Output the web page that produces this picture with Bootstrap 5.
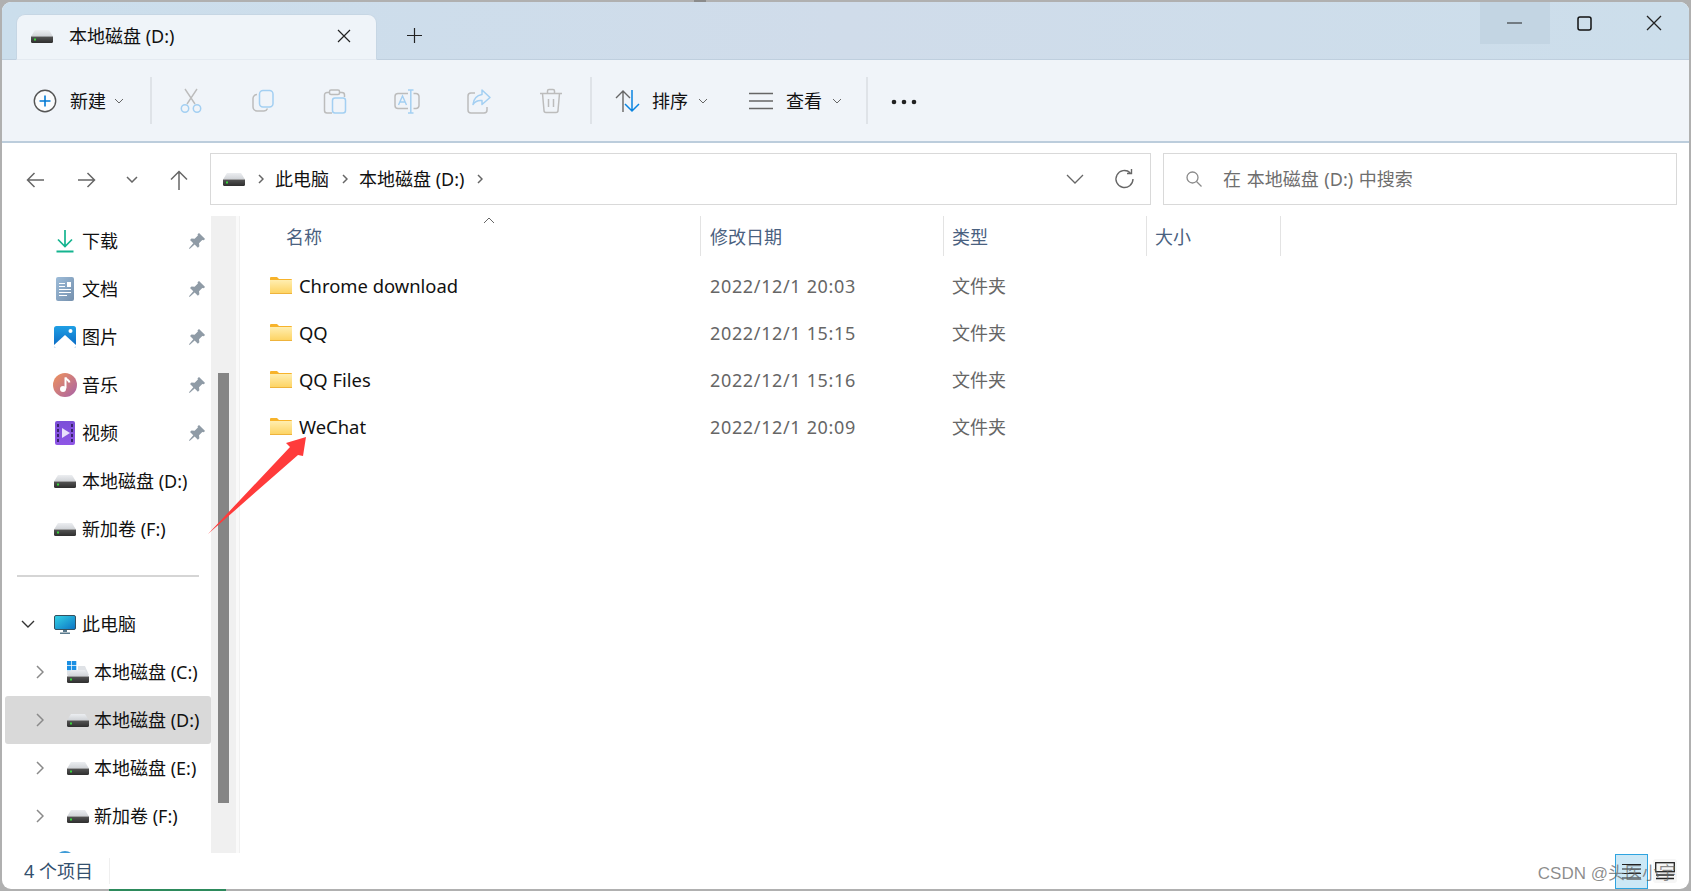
<!DOCTYPE html>
<html lang="zh-CN">
<head>
    <meta charset="UTF-8">
    <title>本地磁盘 (D:)</title>
    <link rel="stylesheet" href="https://cdn.jsdelivr.net/npm/bootstrap@5.3.3/dist/css/bootstrap.min.css">
    <script src="https://cdn.jsdelivr.net/npm/bootstrap@5.3.3/dist/js/bootstrap.bundle.min.js"></script>
    <style>
        html, body { height: 891px; overflow: hidden; }
        body {
            background: #b0b0b0;
            color: #111;
            font-family: "Noto Sans", "Noto Sans CJK SC", sans-serif;
            font-size: 18px;
            line-height: 24px;
        }
        svg { flex: none; display: block; }
        .frame { width: 1691px; height: 891px; padding: 2px; position: relative; }
        .win { height: 887px; background: #fff; border-radius: 9px; overflow: hidden; }

        .title-bar { height: 58px; background: linear-gradient(90deg, #cbdeec, #d0dcea 50%, #ccdeeb); border-bottom: 1px solid #bfcfde; }
        .tab { width: 361px; height: 46px; margin-left: 14px; margin-bottom: -1px; padding: 0 25px 2px 14px; background: #eff4f9; border: 1px solid #c6d6e4; border-bottom-color: #e4eaf1; border-radius: 9px 9px 0 0; }
        .tab-text { margin-left: 16px; }
        .plus { margin-left: 30px; margin-top: 1px; }
        .ctl { height: 42px; }
        .ctl-min { width: 70px; padding-right: 2px; background: #c3d5e3; }
        .ctl-max { width: 69px; }
        .ctl-close { width: 70px; }

        .tools { height: 83px; background: #f0f4f9; border-bottom: 2px solid #bccddc; }
        .tool-new { width: 148px; padding-left: 30px; }
        .lbl-new { margin-left: 12px; }
        .tool-sep { width: 2px; height: 47px; background: #dfe3e8; }
        .tool-cell { width: 72px; }
        .tools-cells { margin-left: 3px; margin-right: 3px; }
        .tool-sort { width: 274px; padding-left: 23px; }
        .lbl-sort { margin-left: 11px; width: 37px; }
        .lbl-view { margin-left: 13px; width: 37px; }
        .caret-1 { margin-left: 9px; }
        .view-icon { margin-left: 41px; }
        .tool-more { margin-left: 23px; margin-top: 2px; }

        .addr-row { height: 73px; padding-top: 10px; padding-bottom: 10px; }
        .nav-btns { width: 208px; }
        .nav-a { width: 65px; }
        .nav-b { width: 40px; }
        .nav-c { width: 50px; }
        .nav-d { width: 44px; }
        .addr-box { width: 941px; height: 52px; border: 1px solid #d9d9d9; padding: 0 14px 0 12px; }
        .crumb { margin-left: 13px; margin-right: 11px; }
        .crumb-text { white-space: nowrap; }
        .addr-end { margin-left: auto; }
        .refresh { margin-left: 30px; }
        .search-box { width: 514px; height: 52px; margin-left: 12px; border: 1px solid #d9d9d9; padding-left: 21px; color: #6e6e6e; }
        .search-text { margin-left: 20px; word-spacing: 1px; }

        .body-row { height: 637px; }
        .side { width: 209px; overflow: hidden; padding-top: 1px; }
        .side-row { height: 48px; position: relative; }
        .lvl0 { padding-left: 50px; }
        .ic-box { width: 25px; margin-right: 5px; display: flex; justify-content: center; }
        .pin { position: absolute; left: 186px; top: 15px; }
        .side-rule { height: 2px; margin: 22px 12px 23px 15px; background: #d5d5d5; }
        .exp { width: 26px; margin-left: 25px; display: flex; justify-content: center; }
        .exp-open { margin-left: 1px; width: 49px; }
        .drive-box { width: 24px; margin-left: 13px; margin-right: 4px; display: flex; justify-content: center; }
        .current { background: #d9d9d9; border-radius: 3px; margin-left: 3px; }
        .current .exp { margin-left: 22px; }
        .net-ic { margin-bottom: 6px; }
        .side-scroll { width: 25px; background: #f0f0f0; padding: 157px 7px 0 7px; }
        .thumb { width: 11px; height: 430px; background: #858585; }
        .split { width: 4px; border-right: 1px solid #f0f0f0; background: #fafafa; }

        .files { flex: 1; }
        .head-row { height: 40px; color: #4a6180; position: relative; }
        .head-cell { padding-top: 1px; }
        .c-name { width: 460px; padding-left: 46px; }
        .c-date { width: 243px; padding-left: 9px; border-left: 1px solid #e3e3e3; }
        .c-type { width: 203px; padding-left: 8px; border-left: 1px solid #e3e3e3; }
        .c-size { width: 135px; padding-left: 8px; border-left: 1px solid #e3e3e3; border-right: 1px solid #e3e3e3; }
        .sort-up { position: absolute; left: 243px; top: 1px; }
        .file-list { margin-top: 6px; }
        .file-row { height: 47px; color: #666; }
        .file-name { width: 460px; padding-left: 30px; color: #111; }
        .folder-name { margin-left: 7px; font-size: 18.4px; }
        .file-date { width: 243px; padding-left: 10px; letter-spacing: .65px; }
        .file-type { width: 203px; padding-left: 9px; }

        .status { height: 36px; color: #33506e; position: relative; }
        .status-count { width: 108px; padding-left: 22px; border-right: 1px solid #efefef; height: 26px; }
        .view-a { width: 33px; height: 35px; margin-left: auto; background: #cce8f6; border: 1px solid #2fa4e0; }
        .view-b { width: 24px; height: 24px; margin-left: 5px; margin-right: 12px; background: #f6f6f6; border-radius: 3px; }

        .stamp { position: absolute; right: 15px; top: 862px; font: 17px/24px "Liberation Sans", "Noto Sans CJK SC", sans-serif; color: rgba(95, 95, 95, .72); white-space: nowrap; }
        .arrow-over { position: absolute; left: 200px; top: 430px; }
        .edge-green { position: absolute; left: 109px; top: 889px; width: 117px; height: 2px; background: #2d8a5c; }
        .edge-top { position: absolute; left: 694px; top: 0; width: 12px; height: 2px; background: #8b8b8b; }
    </style>
</head>
<body>
<svg width="0" height="0" style="position:absolute">
    <defs>
        <linearGradient id="driveTop" x1="0" y1="0" x2="0" y2="1"><stop offset="0" stop-color="#eceef1"/><stop offset="1" stop-color="#cfd2d6"/></linearGradient>
        <linearGradient id="driveFront" x1="0" y1="0" x2="0" y2="1"><stop offset="0" stop-color="#555"/><stop offset="1" stop-color="#2e2e2e"/></linearGradient>
        <linearGradient id="folderFill" x1="0" y1="0" x2="0" y2="1"><stop offset="0" stop-color="#ffeeb0"/><stop offset="1" stop-color="#fdd25f"/></linearGradient>
        <linearGradient id="docFill" x1="0" y1="0" x2="1" y2="1"><stop offset="0" stop-color="#9dbcd9"/><stop offset="1" stop-color="#7590ad"/></linearGradient>
        <linearGradient id="picFill" x1="0" y1="0" x2="0" y2="1"><stop offset="0" stop-color="#1f9fe4"/><stop offset="1" stop-color="#0a66c2"/></linearGradient>
        <linearGradient id="musicFill" x1="0" y1="0" x2="1" y2="1"><stop offset="0" stop-color="#f0935a"/><stop offset="1" stop-color="#a862a8"/></linearGradient>
        <linearGradient id="videoFill" x1="0" y1="0" x2="0" y2="1"><stop offset="0" stop-color="#7b4fd8"/><stop offset="1" stop-color="#8f56e6"/></linearGradient>
        <linearGradient id="pcFill" x1="0" y1="0" x2="1" y2="1"><stop offset="0" stop-color="#35d4e6"/><stop offset="1" stop-color="#0b72c4"/></linearGradient>
        <symbol id="drive" viewBox="0 0 22 13">
            <path d="M4 0h14l4 6.500H0z" fill="url(#driveTop)"/>
            <path d="M0 6.500h22v5a1.500 1.500 0 0 1-1.500 1.500h-19A1.500 1.500 0 0 1 0 11.500z" fill="url(#driveFront)"/>
            <rect x="3" y="8.500" width="2" height="2" fill="#38d43a"/>
        </symbol>
        <symbol id="folder" viewBox="0 0 22 17">
            <path d="M0 1a1 1 0 0 1 1-1h6l2 2h12a1 1 0 0 1 1 1v2H0z" fill="#f7b32b"/>
            <path d="M0 3h22v13a1 1 0 0 1-1 1H1a1 1 0 0 1-1-1z" fill="url(#folderFill)"/>
            <path d="M0 16h22v1H0z" fill="#eeb33c"/>
        </symbol>
        <symbol id="pinIcon" viewBox="0 0 16 16">
            <path d="M9.800.8l5.400 5.400-1.300 1.100-1.200-.3-2.900 2.900.3 2.800-1.300 1.300-2.900-2.900L1.400 15 .9 14.500l3.800-4.600L1.800 7l1.300-1.300 2.800.3 2.900-2.900-.3-1.200z" fill="#8f9ba6"/>
        </symbol>
        <symbol id="caret" viewBox="0 0 10 6">
            <path d="M1 1l4 4 4-4" fill="none" stroke="#666" stroke-width="1"/>
        </symbol>
        <symbol id="chevRight" viewBox="0 0 8 14">
            <path d="M1 1l6 6-6 6" fill="none" stroke="#8a8a8a" stroke-width="1.500"/>
        </symbol>
        <symbol id="crumbSep" viewBox="0 0 6 10">
            <path d="M1 1l4 4-4 4" fill="none" stroke="#666" stroke-width="1.500"/>
        </symbol>
    </defs>
</svg>

<div class="frame">
    <div class="win d-flex flex-column">

        <!-- title bar -->
        <div class="title-bar d-flex align-items-end">
            <div class="tab d-flex align-items-center">
                <svg width="22" height="13"><use href="#drive"/></svg>
                <span class="tab-text">本地磁盘 (D:)</span>
                <svg class="ms-auto" width="14" height="14" viewBox="0 0 14 14"><path d="M1 1l12 12M13 1L1 13" stroke="#222" stroke-width="1.200" fill="none"/></svg>
            </div>
            <svg class="plus mb-3" width="15" height="15" viewBox="0 0 15 15"><path d="M7.500 0v15M0 7.500h15" stroke="#222" stroke-width="1.200"/></svg>
            <div class="d-flex align-self-start ms-auto">
                <div class="ctl ctl-min d-flex align-items-center justify-content-center"><svg width="15" height="2" viewBox="0 0 15 2"><path d="M0 1h15" stroke="#222" stroke-width="1.200"/></svg></div>
                <div class="ctl ctl-max d-flex align-items-center justify-content-center"><svg width="15" height="15" viewBox="0 0 15 15"><rect x="1" y="1" width="13" height="13" rx="2" fill="none" stroke="#111" stroke-width="1.500"/></svg></div>
                <div class="ctl ctl-close d-flex align-items-center justify-content-center"><svg width="16" height="16" viewBox="0 0 16 16"><path d="M1 1l14 14M15 1L1 15" stroke="#222" stroke-width="1.300" fill="none"/></svg></div>
            </div>
        </div>

        <!-- toolbar -->
        <div class="tools d-flex align-items-center">
            <div class="tool-new d-flex align-items-center">
                <svg width="26" height="26" viewBox="0 0 26 26"><circle cx="13" cy="13" r="10.700" fill="#fbfcfd" stroke="#555" stroke-width="1.400"/><path d="M13 7.500v11M7.500 13h11" stroke="#0078d4" stroke-width="1.600"/></svg>
                <span class="lbl-new">新建</span>
                <svg class="ms-2" width="10" height="6"><use href="#caret"/></svg>
            </div>
            <div class="tool-sep"></div>
            <div class="tools-cells d-flex">
                <div class="tool-cell d-flex justify-content-center">
                    <svg width="26" height="26" viewBox="0 0 26 26"><path d="M7 1l10 15M19 1L9 16" stroke="#bcbcbc" stroke-width="1.400" fill="none"/><circle cx="7" cy="20.500" r="3.700" fill="none" stroke="#a3cff2" stroke-width="1.500"/><circle cx="19" cy="20.500" r="3.700" fill="none" stroke="#a3cff2" stroke-width="1.500"/></svg>
                </div>
                <div class="tool-cell d-flex justify-content-center">
                    <svg width="26" height="26" viewBox="0 0 26 26"><path d="M7 6.500a4 4 0 0 0-4 4V19a4 4 0 0 0 4 4h7a4 4 0 0 0 3.500-2.500" fill="none" stroke="#bcbcbc" stroke-width="1.500"/><rect x="9.500" y="2.500" width="13.500" height="16.500" rx="3.500" fill="none" stroke="#a3cff2" stroke-width="1.500"/></svg>
                </div>
                <div class="tool-cell d-flex justify-content-center">
                    <svg width="26" height="26" viewBox="0 0 26 26"><path d="M7 4.500H5a2.500 2.500 0 0 0-2.500 2.500v15.500A2.500 2.500 0 0 0 5 25h5M18 4.500h2a2.500 2.500 0 0 1 2.500 2.500v2" fill="none" stroke="#bcbcbc" stroke-width="1.500"/><rect x="7.500" y="2" width="10" height="4.500" rx="1.500" fill="none" stroke="#bcbcbc" stroke-width="1.500"/><rect x="10.500" y="10" width="13" height="15" rx="2.500" fill="none" stroke="#a3cff2" stroke-width="1.500"/></svg>
                </div>
                <div class="tool-cell d-flex justify-content-center">
                    <svg width="26" height="26" viewBox="0 0 26 26"><path d="M14 5.500H4a3 3 0 0 0-3 3v9a3 3 0 0 0 3 3h10M19.500 5.500h2.500a3 3 0 0 1 3 3v9a3 3 0 0 1-3 3h-2.500" fill="none" stroke="#bcbcbc" stroke-width="1.500"/><path d="M4.500 17L8.500 8l4 9M6 14h5" fill="none" stroke="#a3cff2" stroke-width="1.400"/><path d="M16.800 2v23M14 2h5.500M14 25h5.500" fill="none" stroke="#a3cff2" stroke-width="1.500"/></svg>
                </div>
                <div class="tool-cell d-flex justify-content-center">
                    <svg width="26" height="26" viewBox="0 0 26 26"><path d="M9 5H5a3 3 0 0 0-3 3v14a3 3 0 0 0 3 3h13a3 3 0 0 0 3-3v-3" fill="none" stroke="#bcbcbc" stroke-width="1.500"/><path d="M16 2l8 7.500-8 7v-4c-4-.5-7 1-9 4 .5-5 3.500-9 9-10z" fill="none" stroke="#a3cff2" stroke-width="1.500" stroke-linejoin="round"/></svg>
                </div>
                <div class="tool-cell d-flex justify-content-center">
                    <svg width="26" height="26" viewBox="0 0 26 26"><path d="M2 5.500h22M9.500 5.500V3a1.500 1.500 0 0 1 1.500-1.500h4A1.500 1.500 0 0 1 16.500 3v2.500M4.500 5.500L6 22.500A2 2 0 0 0 8 24.500h10a2 2 0 0 0 2-2l1.500-17M10.500 11v8M15.500 11v8" fill="none" stroke="#bcbcbc" stroke-width="1.500"/></svg>
                </div>
            </div>
            <div class="tool-sep"></div>
            <div class="tool-sort d-flex align-items-center">
                <svg width="26" height="24" viewBox="0 0 26 24"><path d="M8 23V2M1 9l7-7 7 7" fill="none" stroke="#666" stroke-width="1.400"/><path d="M17 1v21M10 15l7 7 7-7" fill="none" stroke="#0a84e0" stroke-width="1.500"/></svg>
                <span class="lbl-sort">排序</span>
                <svg class="caret-1" width="10" height="6"><use href="#caret"/></svg>
                <svg class="view-icon" width="24" height="18" viewBox="0 0 24 18"><path d="M0 1.500h24M0 9h24M0 16.500h24" stroke="#666" stroke-width="1.600"/></svg>
                <span class="lbl-view">查看</span>
                <svg class="caret-1" width="10" height="6"><use href="#caret"/></svg>
            </div>
            <div class="tool-sep"></div>
            <svg class="tool-more" width="26" height="6" viewBox="0 0 26 6"><circle cx="3" cy="3" r="2.300" fill="#222"/><circle cx="13" cy="3" r="2.300" fill="#222"/><circle cx="23" cy="3" r="2.300" fill="#222"/></svg>
        </div>

        <!-- address row -->
        <div class="addr-row d-flex">
            <div class="nav-btns d-flex align-items-center">
                <div class="nav-a d-flex justify-content-center"><svg width="18" height="16" viewBox="0 0 18 16"><path d="M18 8H1.500M8.500 1l-7 7 7 7" fill="none" stroke="#666" stroke-width="1.500"/></svg></div>
                <div class="nav-b d-flex justify-content-center"><svg width="18" height="16" viewBox="0 0 18 16"><path d="M0 8h16.500M9.500 1l7 7-7 7" fill="none" stroke="#666" stroke-width="1.500"/></svg></div>
                <div class="nav-c d-flex justify-content-center"><svg width="12" height="7" viewBox="0 0 12 7"><path d="M1 1l5 5 5-5" fill="none" stroke="#666" stroke-width="1.500"/></svg></div>
                <div class="nav-d d-flex justify-content-center"><svg width="18" height="20" viewBox="0 0 18 20"><path d="M9 20V1.500M1 9.500l8-8 8 8" fill="none" stroke="#666" stroke-width="1.500"/></svg></div>
            </div>
            <div class="addr-box d-flex align-items-center">
                <svg width="22" height="13"><use href="#drive"/></svg>
                <svg class="crumb" width="6" height="10"><use href="#crumbSep"/></svg>
                <span class="crumb-text">此电脑</span>
                <svg class="crumb" width="6" height="10"><use href="#crumbSep"/></svg>
                <span class="crumb-text">本地磁盘 (D:)</span>
                <svg class="crumb" width="6" height="10"><use href="#crumbSep"/></svg>
                <svg class="addr-end" width="18" height="10" viewBox="0 0 18 10"><path d="M1 1l8 8 8-8" fill="none" stroke="#666" stroke-width="1.300"/></svg>
                <svg class="refresh" width="22" height="22" viewBox="0 0 22 22"><path d="M19 11a8.500 8.500 0 1 1-2.800-6.300M17.500 1v4.500H13" fill="none" stroke="#666" stroke-width="1.400"/></svg>
            </div>
            <div class="search-box d-flex align-items-center">
                <svg width="18" height="18" viewBox="0 0 18 18"><circle cx="7.500" cy="7.500" r="5.500" fill="none" stroke="#8a8a8a" stroke-width="1.300"/><path d="M11.500 11.500l5 5" stroke="#8a8a8a" stroke-width="1.300"/></svg>
                <span class="search-text">在 本地磁盘 (D:) 中搜索</span>
            </div>
        </div>

        <!-- body -->
        <div class="body-row d-flex">
            <div class="side">
                <div class="side-row lvl0 d-flex align-items-center">
                    <div class="ic-box"><svg width="20" height="24" viewBox="0 0 20 24"><path d="M10 1v16M3 10.500l7 7 7-7" fill="none" stroke="#14b48f" stroke-width="1.700"/><path d="M1.500 22.500h17" stroke="#14b48f" stroke-width="2"/></svg></div>
                    <span>下载</span>
                    <svg class="pin" width="18" height="18"><use href="#pinIcon"/></svg>
                </div>
                <div class="side-row lvl0 d-flex align-items-center">
                    <div class="ic-box"><svg width="18" height="24" viewBox="0 0 18 24"><rect width="18" height="24" rx="2" fill="url(#docFill)"/><path d="M3 6.500h6M3 9.500h6M3 12.500h12M3 15.500h12M3 18.500h8" stroke="#fff" stroke-width="1"/><rect x="11" y="5" width="4" height="5" fill="#fff"/></svg></div>
                    <span>文档</span>
                    <svg class="pin" width="18" height="18"><use href="#pinIcon"/></svg>
                </div>
                <div class="side-row lvl0 d-flex align-items-center">
                    <div class="ic-box"><svg width="22" height="22" viewBox="0 0 22 22"><rect width="22" height="22" rx="2.500" fill="url(#picFill)"/><path d="M0 19L11 9l11 10v1a2 2 0 0 1-2 2H2a2 2 0 0 1-2-2z" fill="#fff"/><circle cx="16.500" cy="5" r="2" fill="#fff"/></svg></div>
                    <span>图片</span>
                    <svg class="pin" width="18" height="18"><use href="#pinIcon"/></svg>
                </div>
                <div class="side-row lvl0 d-flex align-items-center">
                    <div class="ic-box"><svg width="24" height="24" viewBox="0 0 24 24"><circle cx="12" cy="12" r="12" fill="url(#musicFill)"/><path d="M12.500 4.500v11" stroke="#fff" stroke-width="2"/><path d="M12.500 4.500c1 2.500 3.500 2.500 4 5" stroke="#fff" stroke-width="2" fill="none"/><circle cx="10" cy="16" r="3" fill="#fff"/></svg></div>
                    <span>音乐</span>
                    <svg class="pin" width="18" height="18"><use href="#pinIcon"/></svg>
                </div>
                <div class="side-row lvl0 d-flex align-items-center">
                    <div class="ic-box"><svg width="20" height="24" viewBox="0 0 20 24"><rect width="20" height="24" rx="2" fill="url(#videoFill)"/><path d="M2 3h2v3H2zM2 8h2v3H2zM2 13h2v3H2zM2 18h2v3H2zM16 3h2v3h-2zM16 8h2v3h-2zM16 13h2v3h-2zM16 18h2v3h-2z" fill="#3b2470"/><path d="M7 7l8 5-8 5z" fill="#e8e0fb"/></svg></div>
                    <span>视频</span>
                    <svg class="pin" width="18" height="18"><use href="#pinIcon"/></svg>
                </div>
                <div class="side-row lvl0 d-flex align-items-center">
                    <div class="ic-box"><svg width="22" height="13"><use href="#drive"/></svg></div>
                    <span>本地磁盘 (D:)</span>
                </div>
                <div class="side-row lvl0 d-flex align-items-center">
                    <div class="ic-box"><svg width="22" height="13"><use href="#drive"/></svg></div>
                    <span>新加卷 (F:)</span>
                </div>
                <div class="side-rule"></div>
                <div class="side-row d-flex align-items-center">
                    <div class="exp exp-open"><svg width="14" height="8" viewBox="0 0 14 8"><path d="M1 1l6 6 6-6" fill="none" stroke="#333" stroke-width="1.400"/></svg></div>
                    <div class="ic-box"><svg width="22" height="19" viewBox="0 0 22 19"><rect x=".5" y=".5" width="21" height="14" rx="1.500" fill="url(#pcFill)" stroke="#35505f"/><path d="M9 15h4v2H9zM6 17.500h10V19H6z" fill="#5a7a8c"/></svg></div>
                    <span>此电脑</span>
                </div>
                <div class="side-row d-flex align-items-center">
                    <div class="exp"><svg width="8" height="14"><use href="#chevRight"/></svg></div>
                    <div class="drive-box"><svg width="22" height="22" viewBox="0 0 22 22"><path d="M0 0h4.300v4.300H0zM5 0h4.300v4.300H5zM0 5h4.300v4.300H0zM5 5h4.300v4.300H5z" fill="#1a8fe3"/><path d="M0 10h11V5h7l4 9H0z" fill="#dfe2e6"/><use href="#drive" y="9" width="22" height="13"/></svg></div>
                    <span>本地磁盘 (C:)</span>
                </div>
                <div class="side-row current d-flex align-items-center">
                    <div class="exp"><svg width="8" height="14"><use href="#chevRight"/></svg></div>
                    <div class="drive-box"><svg width="22" height="13"><use href="#drive"/></svg></div>
                    <span>本地磁盘 (D:)</span>
                </div>
                <div class="side-row d-flex align-items-center">
                    <div class="exp"><svg width="8" height="14"><use href="#chevRight"/></svg></div>
                    <div class="drive-box"><svg width="22" height="13"><use href="#drive"/></svg></div>
                    <span>本地磁盘 (E:)</span>
                </div>
                <div class="side-row d-flex align-items-center">
                    <div class="exp"><svg width="8" height="14"><use href="#chevRight"/></svg></div>
                    <div class="drive-box"><svg width="22" height="13"><use href="#drive"/></svg></div>
                    <span>新加卷 (F:)</span>
                </div>
                <div class="side-row lvl0 d-flex align-items-center">
                    <div class="ic-box"><svg class="net-ic" width="20" height="20" viewBox="0 0 20 20"><circle cx="10" cy="10" r="10" fill="#3d9ad6"/></svg></div>
                </div>
            </div>
            <div class="side-scroll"><div class="thumb"></div></div>
            <div class="split"></div>

            <div class="files">
                <div class="head-row d-flex">
                    <div class="c-name head-cell d-flex align-items-center">名称</div>
                    <div class="c-date head-cell d-flex align-items-center">修改日期</div>
                    <div class="c-type head-cell d-flex align-items-center">类型</div>
                    <div class="c-size head-cell d-flex align-items-center">大小</div>
                    <svg class="sort-up" width="12" height="7" viewBox="0 0 12 7"><path d="M1 6l5-5 5 5" fill="none" stroke="#666" stroke-width="1"/></svg>
                </div>
                <div class="file-list">
                    <div class="file-row d-flex align-items-center">
                        <div class="file-name d-flex align-items-center"><svg width="22" height="17"><use href="#folder"/></svg><span class="folder-name">Chrome download</span></div>
                        <div class="file-date">2022/12/1 20:03</div>
                        <div class="file-type">文件夹</div>
                    </div>
                    <div class="file-row d-flex align-items-center">
                        <div class="file-name d-flex align-items-center"><svg width="22" height="17"><use href="#folder"/></svg><span class="folder-name">QQ</span></div>
                        <div class="file-date">2022/12/1 15:15</div>
                        <div class="file-type">文件夹</div>
                    </div>
                    <div class="file-row d-flex align-items-center">
                        <div class="file-name d-flex align-items-center"><svg width="22" height="17"><use href="#folder"/></svg><span class="folder-name">QQ Files</span></div>
                        <div class="file-date">2022/12/1 15:16</div>
                        <div class="file-type">文件夹</div>
                    </div>
                    <div class="file-row d-flex align-items-center">
                        <div class="file-name d-flex align-items-center"><svg width="22" height="17"><use href="#folder"/></svg><span class="folder-name">WeChat</span></div>
                        <div class="file-date">2022/12/1 20:09</div>
                        <div class="file-type">文件夹</div>
                    </div>
                </div>
            </div>
        </div>

        <!-- status bar -->
        <div class="status d-flex align-items-center">
            <div class="status-count d-flex align-items-center">4 个项目</div>
            <div class="view-a d-flex align-items-center justify-content-center">
                <svg width="19" height="17" viewBox="0 0 19 17"><path d="M0 1.500h19M0 6h19M0 10.500h19M0 15h19" stroke="#222" stroke-width="1.200"/></svg>
            </div>
            <div class="view-b d-flex align-items-center justify-content-center">
                <svg width="20" height="18" viewBox="0 0 20 18"><rect x=".7" y=".7" width="18.600" height="9" fill="none" stroke="#222" stroke-width="1.300"/><path d="M1 13h18M1 16.500h18" stroke="#222" stroke-width="1.300"/></svg>
            </div>
        </div>
    </div>

    <div class="edge-green"></div>
    <div class="edge-top"></div>
    <svg class="arrow-over" width="115" height="110" viewBox="200 430 115 110"><path d="M208 534L290 447l-4-4 20-6-3 19-5-1z" fill="#ff3b3b"/></svg>
    <div class="stamp">CSDN @头医小宇</div>
</div>
</body>
</html>
